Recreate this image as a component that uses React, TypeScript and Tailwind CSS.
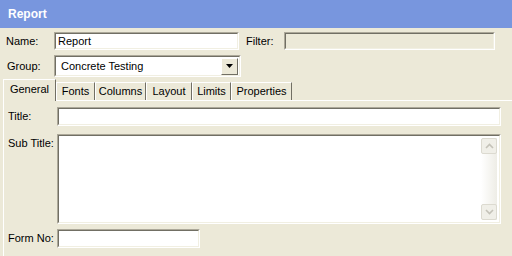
import React from "react";

// ── XP-style sunken field ───────────────────────────────────────────────────
const Sunken: React.FC<{ className?: string; inner?: string; children?: React.ReactNode }> = ({
  className = "",
  inner = "bg-white",
  children,
}) => (
  <div className={`border border-t-[#aca899] border-l-[#aca899] border-b-white border-r-white ${className}`}>
    <div className={`h-full w-full border border-t-[#716f64] border-l-[#716f64] border-b-[#f1efe2] border-r-[#f1efe2] ${inner}`}>
      {children}
    </div>
  </div>
);

const TABS = [
  { label: "General", w: "w-[53px]" },
  { label: "Fonts", w: "w-[39px]" },
  { label: "Columns", w: "w-[51px]" },
  { label: "Layout", w: "w-[46px]" },
  { label: "Limits", w: "w-[39px]" },
  { label: "Properties", w: "w-[61px]" },
];

const ScrollBtn: React.FC<{ up?: boolean }> = ({ up }) => (
  <div className="h-[16px] w-[16px] rounded-[2px] border border-[#dcdad0] bg-[#f0efe8] flex items-center justify-center">
    <svg width="9" height="6" viewBox="0 0 9 6">
      <path
        d={up ? "M1 5 L4.5 1.5 L8 5" : "M1 1 L4.5 4.5 L8 1"}
        fill="none"
        stroke="#c4c2b8"
        strokeWidth="1.6"
      />
    </svg>
  </div>
);

export default function App() {
  return (
    <div
      className="w-[512px] h-[256px] overflow-hidden bg-[#ece9d8] text-[11px] text-black"
      style={{ fontFamily: '"Liberation Sans", Arial, sans-serif' }}
    >
      {/* Title bar */}
      <div className="h-[28px] bg-[#7896de] pl-[8px] flex items-center">
        <span className="text-[12px] font-bold text-white">Report</span>
      </div>

      {/* Name / Filter */}
      <div className="mt-[4px] flex items-center h-[18px]">
        <span className="w-[54px] pl-[6px]">Name:</span>
        <Sunken className="w-[185px] h-[18px]">
          <div className="pl-[2px] leading-[14px]">Report</div>
        </Sunken>
        <span className="w-[45px] pl-[7px]">Filter:</span>
        <Sunken className="w-[211px] h-[18px]" inner="bg-[#ece9d8]" />
      </div>

      {/* Group */}
      <div className="mt-[5px] flex items-center h-[22px]">
        <span className="w-[54px] pl-[7px]">Group:</span>
        <Sunken className="w-[187px] h-[22px]">
          <div className="flex h-full items-center justify-between">
            <span className="pl-[5px]">Concrete Testing</span>
            <div className="mr-[1px] h-[17px] w-[17px] border border-t-white border-l-white border-b-[#716f64] border-r-[#716f64] bg-[#ece9d8] flex items-center justify-center">
              <svg width="7" height="4" viewBox="0 0 7 4">
                <path d="M0 0 H7 L3.5 4 Z" fill="#000" />
              </svg>
            </div>
          </div>
        </Sunken>
      </div>

      {/* Tabs */}
      <div className="mt-[2px] pl-[3px] flex items-end h-[21px] relative z-10">
        {TABS.map((t, i) => {
          const active = i === 0;
          return (
            <div
              key={t.label}
              className={`${t.w} flex items-center justify-center border-l border-t border-r border-l-white border-t-white border-r-[#716f64] ${
                active ? "h-[22px] -mb-[1px] bg-[#ece9d8] pb-[2px]" : "h-[18px] bg-[#ece9d8]"
              }`}
            >
              {t.label}
            </div>
          );
        })}
      </div>

      {/* Panel */}
      <div className="ml-[3px] h-[160px] border-t border-l border-white pl-[3px] pr-[11px] pt-[6px]">
        <div className="flex items-center h-[19px]">
          <span className="w-[50px] pl-[1px]">Title:</span>
          <Sunken className="flex-1 h-[19px]" />
        </div>

        <div className="mt-[8px] flex items-start h-[90px]">
          <span className="w-[50px] pl-[1px] pt-[1px]">Sub Title:</span>
          <Sunken className="flex-1 h-[90px]">
            <div className="flex h-full justify-end p-[2px]">
              <div className="w-[16px] h-full flex flex-col justify-between bg-gradient-to-r from-white to-[#eeede6]">
                <ScrollBtn up />
                <ScrollBtn />
              </div>
            </div>
          </Sunken>
        </div>

        <div className="mt-[5px] flex items-center h-[19px]">
          <span className="w-[50px] pl-[1px]">Form No:</span>
          <Sunken className="w-[143px] h-[19px]" />
        </div>
      </div>
    </div>
  );
}
